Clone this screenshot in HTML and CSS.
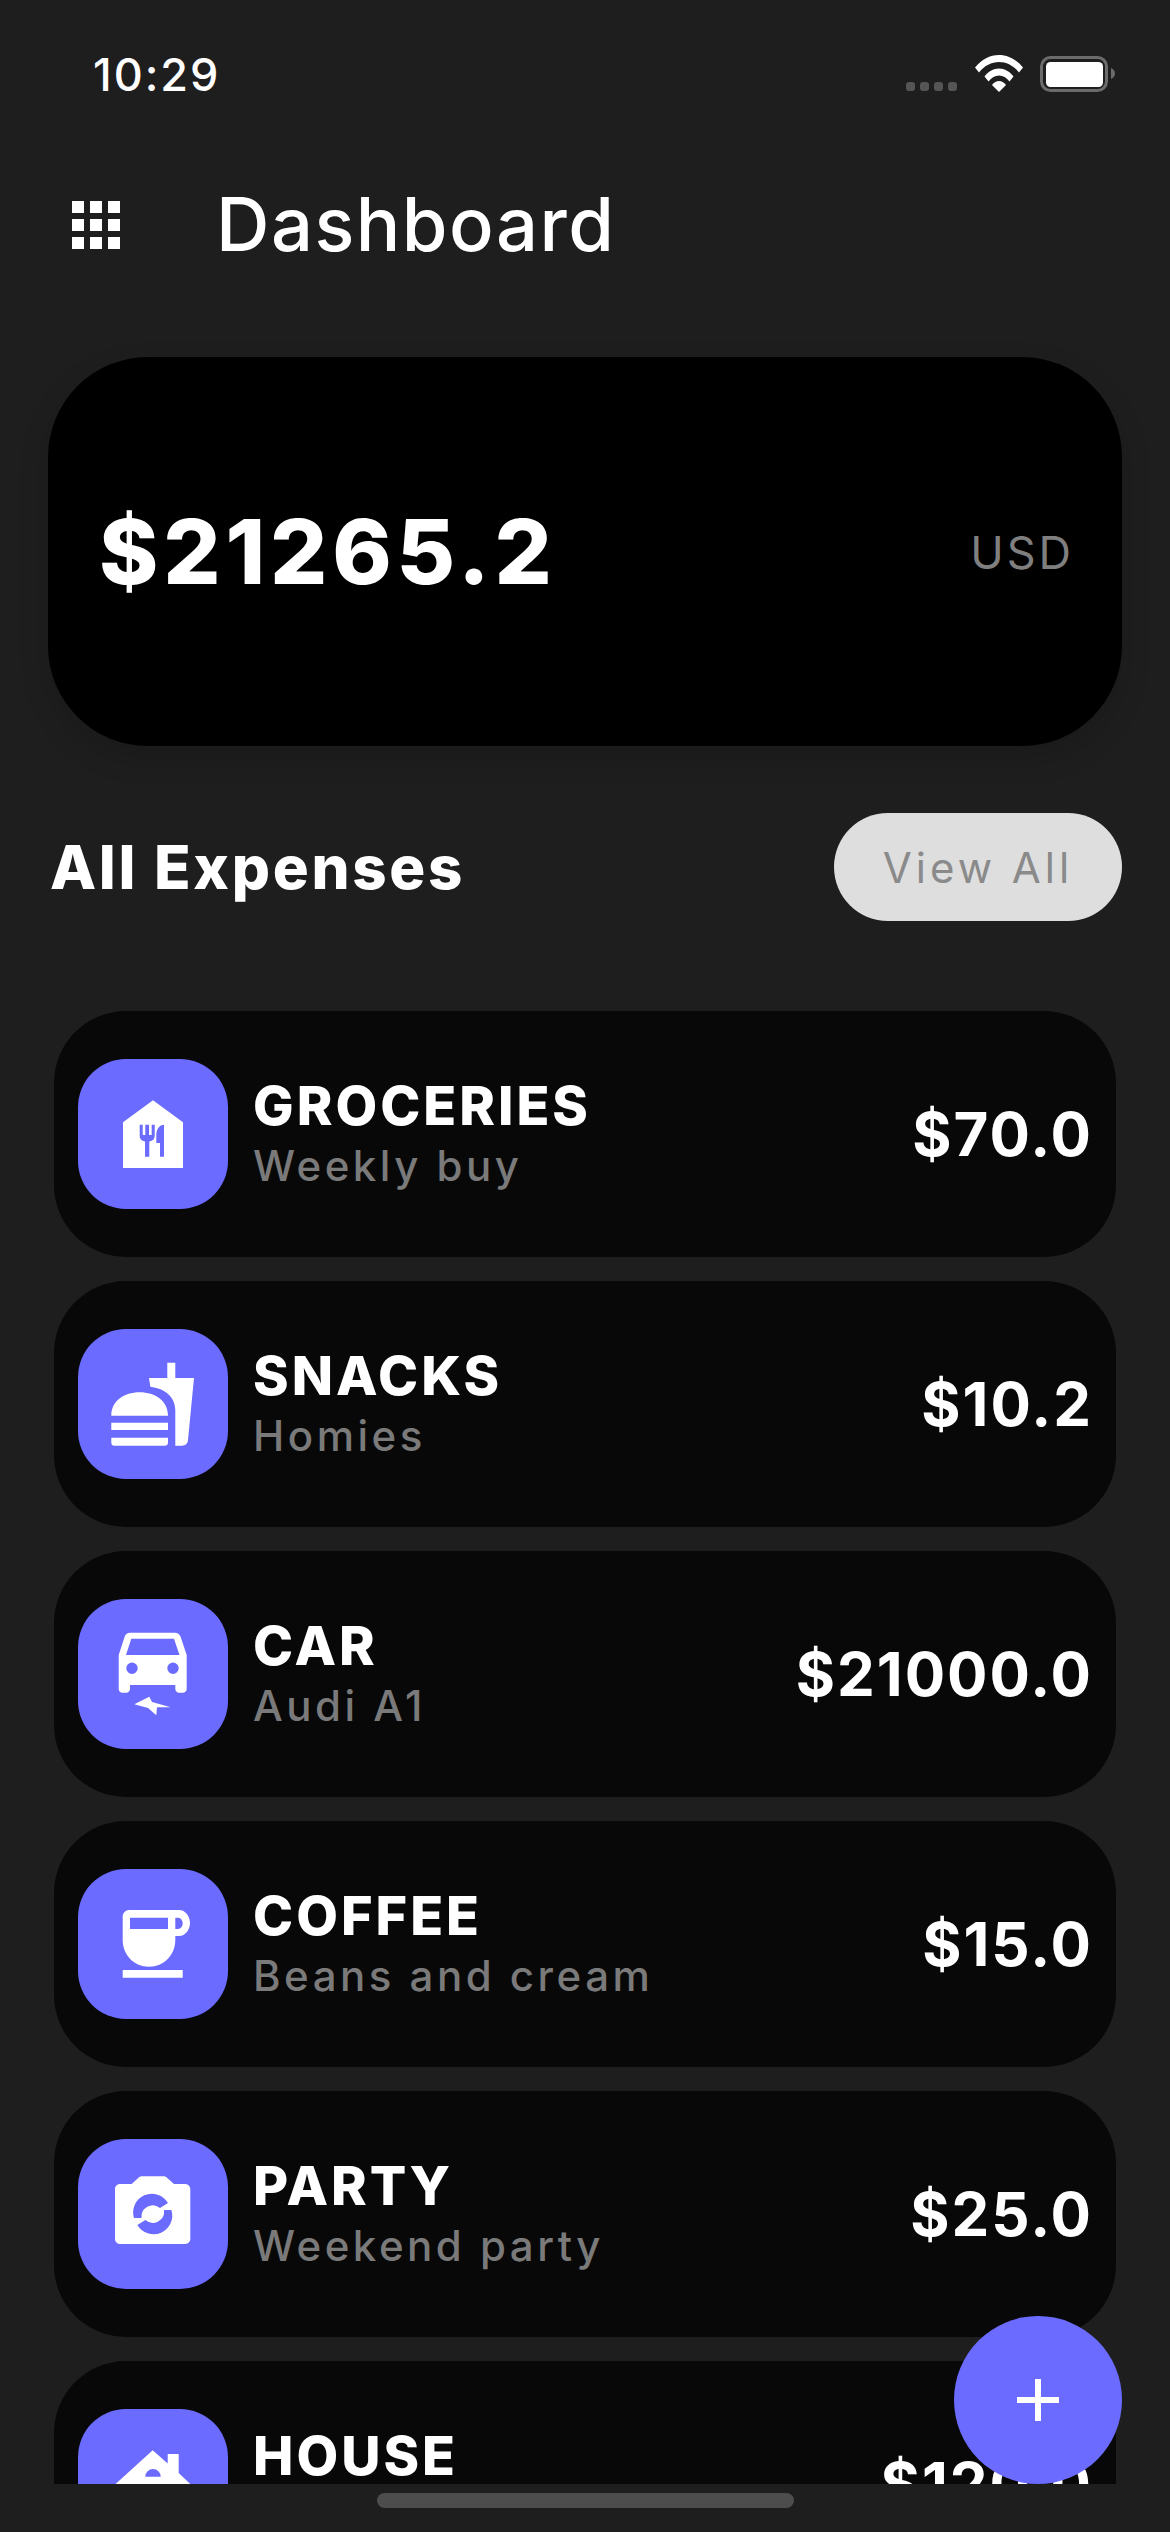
FILE: index.html
```html
<!DOCTYPE html>
<html lang="en">
<head>
<meta charset="utf-8">
<title>Dashboard</title>
<link rel="stylesheet" href="styles.css">
</head>
<body>
<div class="phone">
  <div class="status">
    <span class="time">10:29</span>
    <div class="status-icons">
      <svg class="dots" viewBox="0 0 52 9"><rect width="9" height="9" rx="3" x="0"/><rect width="9" height="9" rx="3" x="14"/><rect width="9" height="9" rx="3" x="28"/><rect width="9" height="9" rx="3" x="42"/></svg>
      <svg class="wifi" viewBox="0 0 48 37"><path d="M0 12.500C6.500 4.500 15 0 24 0s17.500 4.500 24 12.500l-4 5C38.500 10.500 31.500 7 24 7S9.500 10.500 4 17.500z"/><path d="M9.500 21.500C13 16.500 18.500 13.500 24 13.500s11 3 14.500 8l-4 5C31.500 22.500 28 20.500 24 20.500s-7.500 2-10.500 6z"/><path d="M17 30c2-2.500 4.500-4 7-4s5 1.500 7 4l-7 7z"/></svg>
      <svg class="battery" viewBox="0 0 75 36"><rect x="1.500" y="1.500" width="65" height="33" rx="9" fill="none" stroke="#6b6b6b" stroke-width="3"/><rect x="6" y="6" width="57" height="25" rx="4.500" fill="#fff"/><path d="M71 12c2.500 1 4 3 4 5.500s-1.500 4.500-4 5.500z" fill="#6b6b6b"/></svg>
    </div>
  </div>

  <header class="topbar">
    <svg class="menu" viewBox="0 0 48 48"><path d="M0 0h12v12H0zM18 0h12v12H18zM36 0h12v12H36zM0 18h12v12H0zM18 18h12v12H18zM36 18h12v12H36zM0 36h12v12H0zM18 36h12v12H18zM36 36h12v12H36z"/></svg>
    <h1 class="title">Dashboard</h1>
  </header>

  <section class="balance">
    <span class="balance-amount">$21265.2</span>
    <span class="balance-cur">USD</span>
  </section>

  <div class="section-head">
    <h2 class="section-title">All Expenses</h2>
    <span class="view-all">View All</span>
  </div>

  <div class="list">
    <article class="row">
      <div class="tile">
        <svg viewBox="0 0 150 150"><path class="g" fill-rule="evenodd" d="M75 41.300 105 63.300V109H45V63.300zM61.700 65.700V77C61.700 80 63.500 82 67 82.500V97.700H71.300V82.500C74.800 82 76.700 80 76.700 77V65.700H73.700V76H71V65.700H67.300V76H64.700V65.700zM86 65.700C81.500 65.700 78.300 70 78.300 76V84H82V97.700H86z"/></svg>
      </div>
      <div class="info"><div class="name">GROCERIES</div><div class="sub">Weekly buy</div></div>
      <div class="amt">$70.0</div>
    </article>
    <article class="row">
      <div class="tile">
        <svg viewBox="0 0 150 150"><path class="g" d="M33.300 86.700C33.300 72 46 63.300 61.700 63.300S90 72 90 86.700zM33.300 93.700H90V101H33.300zM33.300 108.700H90V113.700C90 115.500 88.500 116.700 87 116.700H36.300C34.500 116.700 33.300 115.500 33.300 113.700zM89.300 33.700H97.300V49H116L110 111C109.700 114.500 107.500 116.700 104 116.700H97.300V81C97.300 68 87 59.500 72.300 57.700L71 49H89.300z"/></svg>
      </div>
      <div class="info"><div class="name">SNACKS</div><div class="sub">Homies</div></div>
      <div class="amt">$10.2</div>
    </article>
    <article class="row">
      <div class="tile">
        <svg viewBox="0 0 150 150"><path class="g" fill-rule="evenodd" d="M52 33.700H97C99.500 33.700 101.500 35 102.500 37.500L108.700 56V90C108.700 92 107 93.700 105 93.700H101C99 93.700 97.300 92 97.300 90V86H52V90C52 92 50.300 93.700 48.300 93.700H44.300C42.300 93.700 40.700 92 40.700 90V56L46.700 37.500C47.500 35 49.500 33.700 52 33.700zM53.300 39.700 48 56H101.500L96 39.700zM54 63.600A5.700 5.700 0 1 0 54 75A5.700 5.700 0 1 0 54 63.600zM95 63.600A5.700 5.700 0 1 0 95 75A5.700 5.700 0 1 0 95 63.600z"/><path class="g" d="M56.300 105.300 71.300 97.700 74 103 92.700 108.300H79L78.300 116.300 70 109z"/></svg>
      </div>
      <div class="info"><div class="name">CAR</div><div class="sub">Audi A1</div></div>
      <div class="amt">$21000.0</div>
    </article>
    <article class="row">
      <div class="tile">
        <svg viewBox="0 0 150 150"><path class="g" fill-rule="evenodd" d="M51 41H101C107.500 41 112 47.500 112 54S107.500 67 101 67H97.300V71C97.300 86 86 97.700 71 97.700S44.700 86 44.700 71V47.500C44.700 44 47.500 41 51 41zM52 48.700V60H90V48.700zM97.300 48.700V60H100C103 60 104.700 57 104.700 54.300S103 48.700 100 48.700zM44.700 101H104.700V108.700H44.700z"/></svg>
      </div>
      <div class="info"><div class="name">COFFEE</div><div class="sub">Beans and cream</div></div>
      <div class="amt">$15.0</div>
    </article>
    <article class="row">
      <div class="tile">
        <svg viewBox="0 0 150 150"><path class="g" fill-rule="evenodd" d="M64 37.300H85.700C87 37.300 88 37.800 89 38.800L96 45H107C110 45 112.300 47.300 112.300 50V100C112.300 102.700 110 105 107 105H42C39.300 105 37 102.700 37 100V50C37 47.300 39.300 45 42 45H53.700L60.500 38.800C61.500 37.800 62.700 37.300 64 37.300zM56 79A18.700 18.700 0 0 1 90 64L82 69A11.300 11.300 0 0 0 63.500 79zM93.400 71A18.700 18.700 0 0 1 59.400 86L67.400 81A11.300 11.300 0 0 0 86 71z"/></svg>
      </div>
      <div class="info"><div class="name">PARTY</div><div class="sub">Weekend party</div></div>
      <div class="amt">$25.0</div>
    </article>
    <article class="row">
      <div class="tile">
        <svg viewBox="0 0 150 150"><path class="g" fill-rule="evenodd" d="M74.700 41.300 89.700 54.500V45H100.700V64L128 90H112V112H37V90H21zM67.300 67.700H82.700A7.700 7.700 0 0 0 67.300 67.700z"/></svg>
      </div>
      <div class="info"><div class="name">HOUSE</div><div class="sub">Rent</div></div>
      <div class="amt">$120.0</div>
    </article>
  </div>

  <div class="home-area"><span class="home-bar"></span></div>

  <button class="fab" type="button" aria-label="Add">
    <svg viewBox="0 0 42 42"><path d="M18 0h6v18h18v6H24v18h-6V24H0v-6h18z"/></svg>
  </button>
</div>
</body>
</html>
```
FILE: styles.css
```css
* { box-sizing: border-box; }
html, body { margin: 0; padding: 0; }
body {
  width: 1170px;
  height: 2532px;
  background: #1f1e1f;
  font-family: Inter, "Liberation Sans", sans-serif;
  color: #fff;
  overflow: hidden;
}
.phone {
  position: relative;
  width: 1170px;
  height: 2532px;
  display: flex;
  flex-direction: column;
}
.status {
  height: 157px;
  flex: none;
  display: flex;
  justify-content: space-between;
  padding: 52px 55px 0 93px;
}
.time { font-size: 45px; line-height: 45px; font-weight: 500; letter-spacing: 2px; }
.status-icons { display: flex; position: relative; padding-top: 3px; height: 40px; align-items: flex-start; }
.status-icons svg { display: block; }
.dots { width: 52px; height: 9px; fill: #555; margin-top: 27px; margin-right: 17px; }
.wifi { width: 48px; height: 37px; fill: #fff; margin-right: 17px; }
.battery { width: 75px; height: 36px; margin-top: 1px; }

.topbar {
  flex: none;
  height: 136px;
  display: flex;
  align-items: center;
  padding-left: 72px;
}
.menu { width: 48px; height: 48px; fill: #fff; margin-right: 96px; }
.title { margin: 0 0 3px; font-size: 74px; font-weight: 500; letter-spacing: 1.500px; line-height: 1; }

.balance {
  flex: none;
  margin: 64px 48px 0;
  height: 389px;
  border-radius: 100px;
  background: #000;
  box-shadow: 0 12px 30px rgba(0,0,0,.15);
  display: flex;
  align-items: center;
  justify-content: space-between;
  padding: 0 48px 0 51px;
}
.balance-amount { font-size: 90px; font-weight: 800; letter-spacing: 4.800px; }
.balance-cur { font-size: 45px; color: #7f7f7f; letter-spacing: 3px; padding-top: 2px; }

.section-head {
  flex: none;
  margin: 67px 48px 0 50px;
  height: 108px;
  display: flex;
  align-items: center;
  justify-content: space-between;
}
.section-title { margin: 0; font-size: 60px; font-weight: 800; letter-spacing: 2.700px; }
.view-all {
  width: 288px;
  height: 108px;
  border-radius: 54px;
  background: #dedede;
  color: #8a8a8a;
  font-size: 42px;
  letter-spacing: 4px;
  display: flex;
  align-items: center;
  justify-content: center;
}

.list {
  flex: none;
  height: 1473px;
  margin: 90px 54px 0;
  overflow: hidden;
  display: flex;
  flex-direction: column;
  gap: 24px;
}
.row {
  flex: none;
  height: 246px;
  border-radius: 72px;
  background: #080808;
  display: flex;
  align-items: center;
  padding: 0 23px 0 24px;
}
.tile {
  flex: none;
  width: 150px;
  height: 150px;
  border-radius: 48px;
  background: #6b6bff;
  margin-right: 25px;
}
.tile svg { display: block; width: 150px; height: 150px; }
.g { fill: #fff; }
.info { flex: 1; min-width: 0; padding-top: 8px; }
.name { font-size: 54px; font-weight: 800; letter-spacing: 3px; line-height: 56px; }
.sub { font-size: 42px; font-weight: 500; color: #7a7a7a; letter-spacing: 3.500px; line-height: 64px; }
.amt { font-size: 60px; font-weight: 700; letter-spacing: 2px; }

.home-area {
  flex: 1;
  display: flex;
  justify-content: center;
  padding-top: 9px;
}
.home-bar { width: 417px; height: 15px; border-radius: 8px; background: #4d4d4d; }

.fab {
  position: absolute;
  left: 954px;
  top: 2316px;
  width: 168px;
  height: 168px;
  border: 0;
  padding: 0;
  border-radius: 50%;
  background: #6b6bff;
  display: flex;
  align-items: center;
  justify-content: center;
}
.fab svg { width: 42px; height: 42px; fill: #fff; display: block; }
```
